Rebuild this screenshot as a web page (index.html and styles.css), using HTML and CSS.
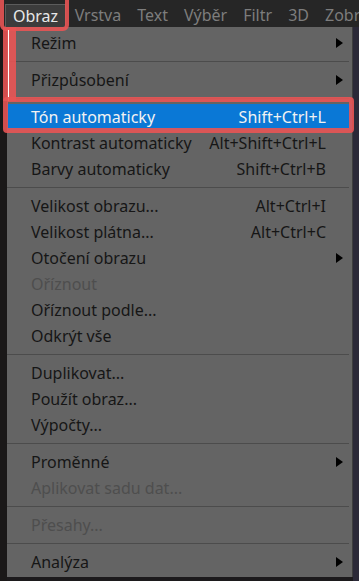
FILE: index.html
```html
<!DOCTYPE html>
<html lang="cs">
<head>
  <meta charset="UTF-8">
  <title>Obraz menu</title>
  <link rel="stylesheet" href="styles.css">
</head>
<body>
  <div class="menubar">
    <span class="tab active">Obraz</span>
    <span class="tab">Vrstva</span>
    <span class="tab">Text</span>
    <span class="tab">Výběr</span>
    <span class="tab">Filtr</span>
    <span class="tab">3D</span>
    <span class="tab">Zobrazení</span>
  </div>

  <div class="scene">
    <div class="strip-left"></div>

    <div class="menu">
      <div class="item"><span>Režim</span><i class="arrow"></i></div>
      <div class="sep"></div>
      <div class="item"><span>Přizpůsobení</span><i class="arrow"></i></div>
      <div class="sep"></div>
      <div class="item hot"><span>Tón automaticky</span><span class="key">Shift+Ctrl+L</span></div>
      <div class="item"><span>Kontrast automaticky</span><span class="key">Alt+Shift+Ctrl+L</span></div>
      <div class="item"><span>Barvy automaticky</span><span class="key">Shift+Ctrl+B</span></div>
      <div class="sep"></div>
      <div class="item"><span>Velikost obrazu...</span><span class="key">Alt+Ctrl+I</span></div>
      <div class="item"><span>Velikost plátna...</span><span class="key">Alt+Ctrl+C</span></div>
      <div class="item"><span>Otočení obrazu</span><i class="arrow"></i></div>
      <div class="item off"><span>Oříznout</span></div>
      <div class="item"><span>Oříznout podle...</span></div>
      <div class="item"><span>Odkrýt vše</span></div>
      <div class="sep"></div>
      <div class="item"><span>Duplikovat...</span></div>
      <div class="item"><span>Použít obraz...</span></div>
      <div class="item"><span>Výpočty...</span></div>
      <div class="sep"></div>
      <div class="item"><span>Proměnné</span><i class="arrow"></i></div>
      <div class="item off"><span>Aplikovat sadu dat...</span></div>
      <div class="sep"></div>
      <div class="item off"><span>Přesahy...</span></div>
      <div class="sep"></div>
      <div class="item"><span>Analýza</span><i class="arrow"></i></div>
    </div>

    <div class="strip-right"></div>
  </div>

  <!-- red annotation marks drawn over the screenshot -->
  <div class="mark mark-tab"></div>
  <div class="mark mark-link"></div>
  <div class="mark mark-item"></div>
</body>
</html>
```

FILE: styles.css
```css
* {
  box-sizing: border-box;
}

body {
  margin: 0;
  width: 359px;
  height: 581px;
  overflow: hidden;
  position: relative;
  background: #1c1a1c;
  font-family: "Noto Sans", "Open Sans", sans-serif;
  font-size: 16px;
}

.menubar {
  height: 27px;
  background: #262626;
  display: flex;
  align-items: flex-end;
  padding-left: 5px;
  white-space: nowrap;
  overflow: hidden;
}

.tab {
  height: 23px;
  line-height: 22px;
  padding: 0 7.5px;
  margin-right: 1px;
  color: #7d7d7d;
}

.tab.active {
  background: #3c3c3c;
  color: #e8e8e8;
  border: 1px solid #5c5c5c;
  border-bottom: none;
  padding: 0 7px;
}

.scene {
  display: flex;
  height: 554px;
}

.strip-left {
  width: 7px;
  background: #1a1818;
}

.strip-right {
  flex: 1;
  background: #2b2938;
}

.menu {
  width: 346px;
  height: 550px;
  background: #646464;
  border-right: 1px solid #3e3e3e;
  padding-top: 3px;
}

.item {
  height: 26px;
  display: flex;
  align-items: center;
  padding: 0 26px 0 24px;
  color: #161616;
}

.item span:first-child {
  flex: 1;
}

.item.hot {
  background: #0a78d6;
  color: #f2f2f2;
}

.item.off {
  color: #4e4e4e;
}

.key {
  text-align: right;
}

.arrow {
  width: 0;
  height: 0;
  border-top: 5px solid transparent;
  border-bottom: 5px solid transparent;
  border-left: 7px solid #000;
  margin-right: -17px;
}

.sep {
  height: 11px;
  display: flex;
  align-items: center;
  padding-right: 3px;
}

.sep::after {
  content: "";
  flex: 1;
  height: 1px;
  background: #4c4c4c;
}

.mark {
  position: absolute;
  border-color: rgba(232, 84, 84, 0.9);
  border-style: solid;
}

.mark-tab {
  left: 0;
  top: -6px;
  width: 69px;
  height: 37px;
  border-width: 4px;
  border-radius: 6px;
}

.mark-link {
  left: 3px;
  top: 27px;
  width: 13px;
  height: 74px;
  border: none;
  background: rgba(232, 84, 84, 0.9);
}

.mark-link::after {
  content: "";
  position: absolute;
  left: 5px;
  top: 3px;
  bottom: 0;
  width: 1px;
  background: #fff;
}

.mark-item {
  left: 3px;
  top: 97px;
  width: 351px;
  height: 36px;
  border-width: 5px;
  border-radius: 4px;
}
```
